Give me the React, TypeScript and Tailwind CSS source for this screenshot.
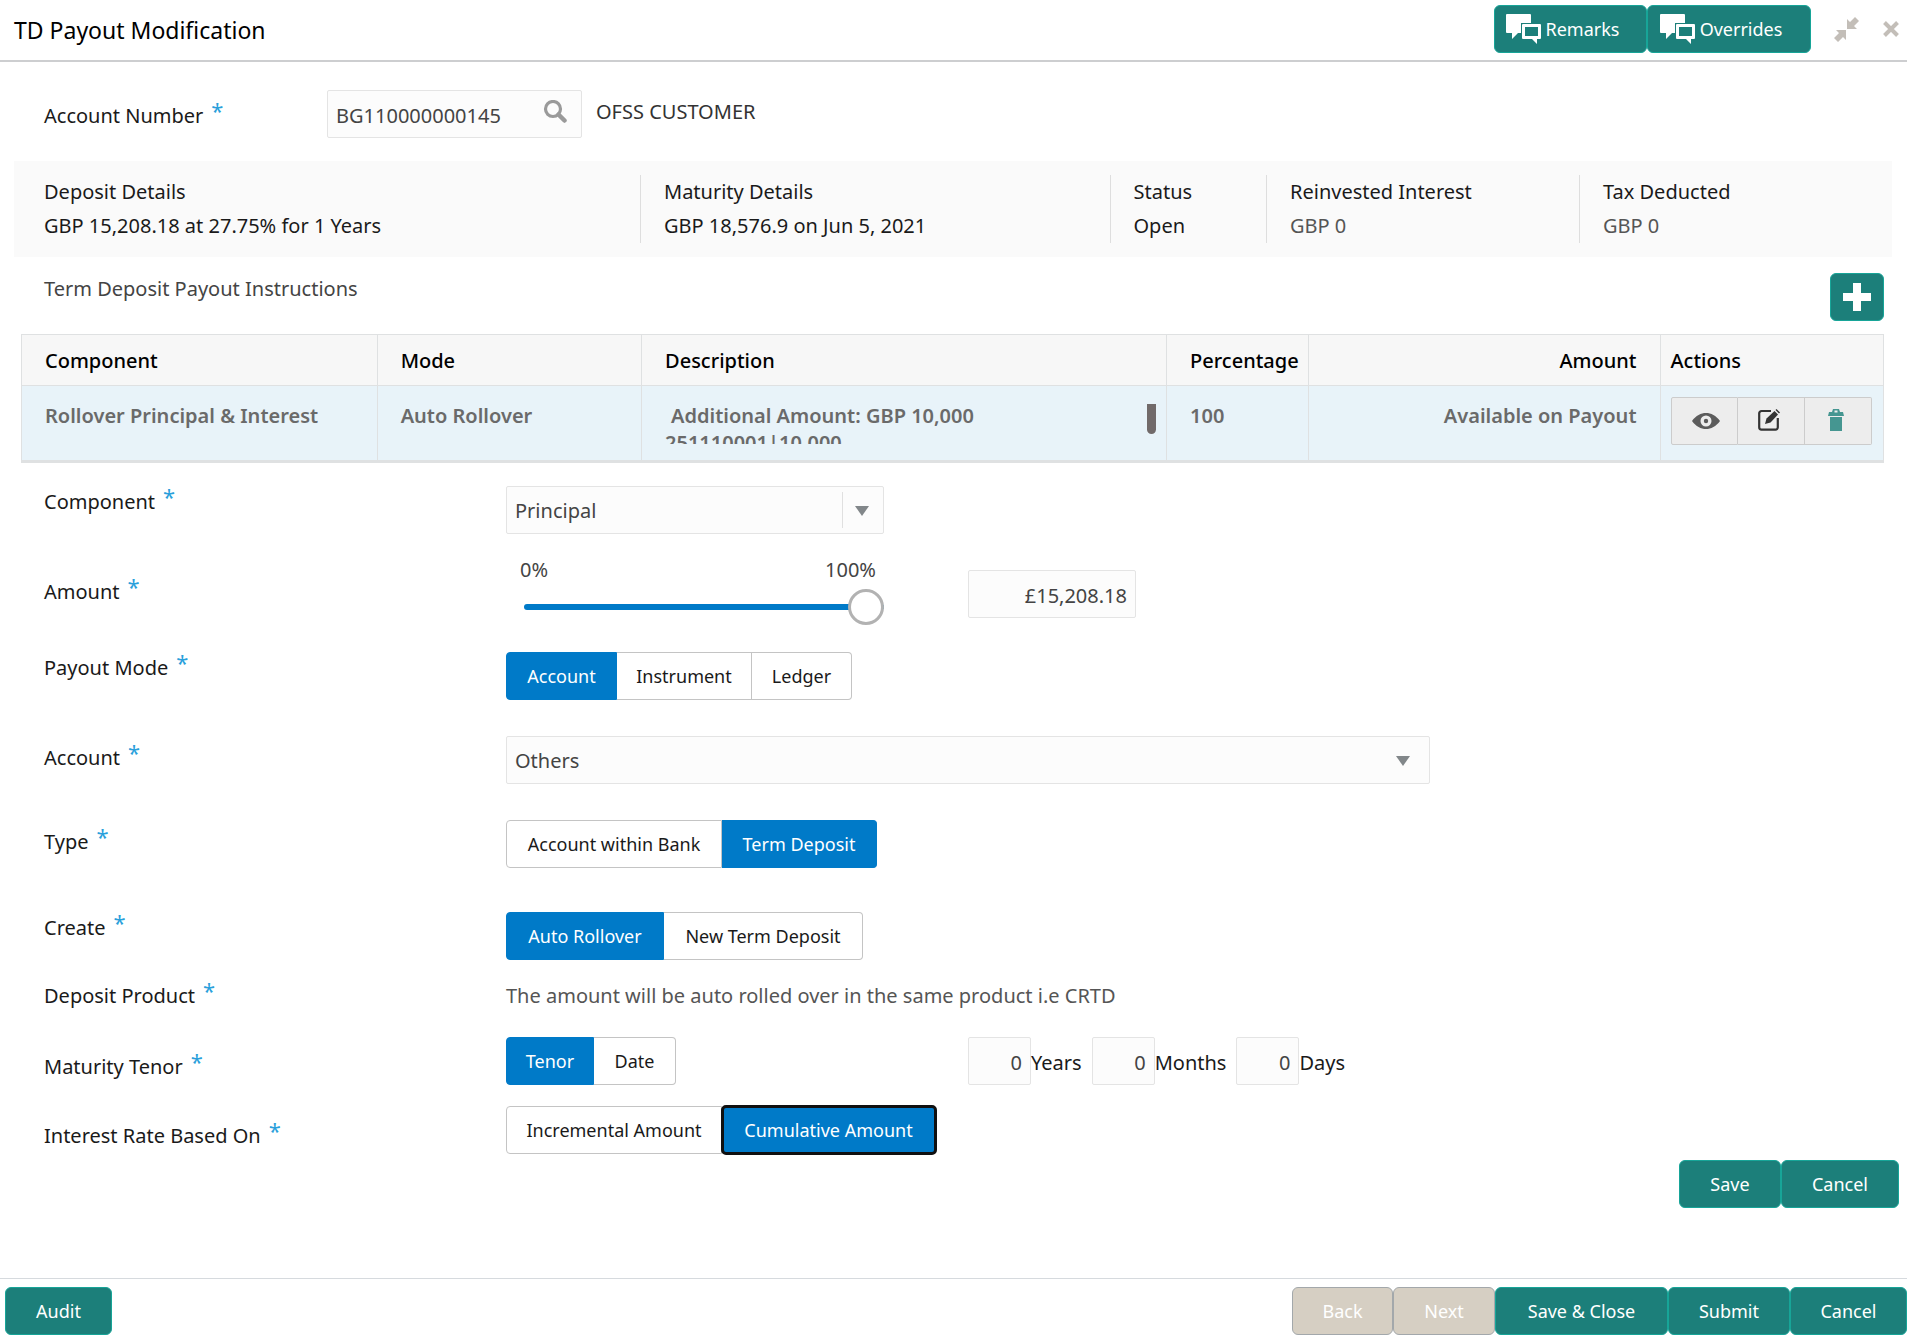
import { useState, type ReactNode } from 'react'
import { clsx } from 'clsx'

function ChatIcon() {
  return (
    <svg width="35" height="30" viewBox="0 0 35 30" aria-hidden="true">
      <path d="M1 0h23a1 1 0 0 1 1 1v8H15v10h-3l-6 6v-6H1a1 1 0 0 1-1-1V1a1 1 0 0 1 1-1z" fill="#fff" />
      <path
        fillRule="evenodd"
        d="M17 10h17a1 1 0 0 1 1 1v13a1 1 0 0 1-1 1h-3v5l-5-5h-9a1 1 0 0 1-1-1V11a1 1 0 0 1 1-1zm2 3v9h13v-9z"
        fill="#fff"
      />
    </svg>
  )
}

function SearchIcon() {
  return (
    <svg width="24" height="24" viewBox="0 0 24 24" fill="none" stroke="#9a9a9a" aria-hidden="true">
      <circle cx="10" cy="9" r="7.5" strokeWidth="3.2" />
      <path d="M15.500 14.500l6 6" strokeWidth="4.500" strokeLinecap="round" />
    </svg>
  )
}

function CollapseIcon() {
  return (
    <svg width="25" height="25" viewBox="0 0 25 25" fill="#c3beb8" aria-hidden="true">
      <path d="M13 12V2l3 3 5-5 4 4-5 5 3 3z" />
      <path d="M12 13v10l-3-3-5 5-4-4 5-5-3-3z" />
    </svg>
  )
}

function CloseIcon() {
  return (
    <svg width="16" height="16" viewBox="0 0 16 16" stroke="#c3beb8" strokeWidth="4" aria-hidden="true">
      <path d="M1.500 1.500l13 13M14.500 1.500l-13 13" />
    </svg>
  )
}

function PlusIcon() {
  return (
    <svg width="28" height="28" viewBox="0 0 28 28" fill="#fff" aria-hidden="true">
      <path d="M10 0h8v10h10v8H18v10h-8V18H0v-8h10z" />
    </svg>
  )
}

function EyeIcon() {
  return (
    <svg width="28" height="16" viewBox="0 0 28 16" fill="#5c5c5c" aria-hidden="true">
      <path
        fillRule="evenodd"
        d="M0 8C4 2.500 9 0 14 0s10 2.500 14 8c-4 5.500-9 8-14 8S4 13.500 0 8zm14-5.500a5.500 5.500 0 1 0 0 11 5.500 5.500 0 0 0 0-11z"
      />
      <circle cx="14" cy="8" r="2.200" />
    </svg>
  )
}

function EditIcon() {
  return (
    <svg width="22" height="22" viewBox="0 0 22 22" aria-hidden="true">
      <path
        d="M13 2H3.500A2.300 2.300 0 0 0 1.200 4.300v14a2.300 2.300 0 0 0 2.300 2.300h14a2.300 2.300 0 0 0 2.300-2.300V9"
        fill="none"
        stroke="#333"
        strokeWidth="2.200"
      />
      <path d="M7 15l1.500-5.500L16.500 2l3.500 3.500-7.500 8z" fill="#333" />
      <path d="M17.500 1l1-1L22 3.500l-1 1z" fill="#333" />
    </svg>
  )
}

function TrashIcon() {
  return (
    <svg width="16" height="22" viewBox="0 0 16 22" fill="#459691" aria-hidden="true">
      <path fillRule="evenodd" d="M5 0h6l1 3h3l1 4H0l1-4h3zm1.500 1.500v2h3v-2z" />
      <path d="M2 8h12v14H2z" />
    </svg>
  )
}

function Arrow() {
  return (
    <svg width="14" height="10" viewBox="0 0 14 10" fill="#82878a" aria-hidden="true">
      <path d="M0 0h14L7 10z" />
    </svg>
  )
}

interface ActionButtonProps {
  children: ReactNode
  className?: string
  disabled?: boolean
}

function ActionButton({ children, className, disabled }: ActionButtonProps) {
  return (
    <button
      type="button"
      disabled={disabled}
      className={clsx(
        'flex h-12 items-center justify-center rounded-md border text-lg text-white',
        disabled ? 'border-[#a3a8ab] bg-[#d6cfc3]' : 'border-[#17a598] bg-[#1c7f7a]',
        className,
      )}
    >
      {children}
    </button>
  )
}

function Required() {
  return <span className="ml-2 text-[22px] leading-4 text-[#2a9fdb]">*</span>
}

interface FormRowProps {
  label: string
  htmlFor?: string
  className: string
  labelClass?: string
  children: ReactNode
}

function FormRow({ label, htmlFor, className, labelClass = 'pt-0.5', children }: FormRowProps) {
  return (
    <div className={clsx('grid grid-cols-4', className)}>
      <label htmlFor={htmlFor} className={clsx('flex items-start leading-7 text-[#1a1a1a]', labelClass)}>
        {label}
        <Required />
      </label>
      {children}
    </div>
  )
}

interface Option {
  label: string
  width: string
}

interface ToggleGroupProps {
  name: string
  options: Option[]
  initial: string
  focused?: boolean
}

function ToggleGroup({ name, options, initial, focused }: ToggleGroupProps) {
  const [value, setValue] = useState(initial)

  return (
    <div role="group" aria-label={name} className="flex h-12">
      {options.map((option, i) => {
        const selected = option.label === value
        return (
          <button
            key={option.label}
            type="button"
            aria-pressed={selected}
            onClick={() => setValue(option.label)}
            className={clsx(
              'h-12 border text-lg whitespace-nowrap',
              option.width,
              i === 0 && 'rounded-l-sm',
              i === options.length - 1 && 'rounded-r-sm',
              i > 0 && 'border-l-0',
              selected ? 'border-[#007ac8] bg-[#007ac8] text-white' : 'border-[#c4c4c4] bg-white text-[#1a1a1a]',
              selected && focused && 'rounded-sm outline-3 -outline-offset-2 outline-[#101010]',
            )}
          >
            {option.label}
          </button>
        )
      })}
    </div>
  )
}

const inputClass = 'h-12 rounded-xs border border-[#e4e4e4] bg-[#fcfcfc] px-2 pt-0.5 text-[#444]'
const iconButtonClass = 'flex h-12 w-[67px] items-center justify-center border-[#ccc] bg-[#ededed]'

const summary = [
  { title: 'Deposit Details', value: 'GBP 15,208.18 at 27.75% for 1 Years', className: 'col-span-4 pl-[30px]' },
  { title: 'Maturity Details', value: 'GBP 18,576.9 on Jun 5, 2021', className: 'col-span-3 border-l pl-[23px]' },
  { title: 'Status', value: 'Open', className: 'col-span-1 border-l pl-[23px]' },
  { title: 'Reinvested Interest', value: 'GBP 0', className: 'col-span-2 border-l pl-[23px]', muted: true },
  { title: 'Tax Deducted', value: 'GBP 0', className: 'col-span-2 border-l pl-[23px]', muted: true },
]

const tenorUnits = ['Years', 'Months', 'Days']

function InstructionsTable() {
  return (
    <table className="w-full table-fixed border border-b-3 border-[#dfe1e2] text-left">
      <colgroup>
        <col className="w-[19.1%]" />
        <col className="w-[14.2%]" />
        <col className="w-[28.2%]" />
        <col className="w-[7.6%]" />
        <col className="w-[18.9%]" />
        <col className="w-[12%]" />
      </colgroup>
      <thead className="bg-[#f7f7f7] text-black">
        <tr className="h-[51px] divide-x divide-[#dfe1e2] border-b border-[#dfe1e2]">
          <th className="pt-0.5 pl-[23px] font-medium">Component</th>
          <th className="pt-0.5 pl-[23px] font-medium">Mode</th>
          <th className="pt-0.5 pl-[23px] font-medium">Description</th>
          <th className="pt-0.5 pl-[23px] font-medium">Percentage</th>
          <th className="pt-0.5 pr-[23px] text-right font-medium">Amount</th>
          <th className="pt-0.5 pl-2.5 font-medium">Actions</th>
        </tr>
      </thead>
      <tbody className="bg-[#e8f3f9] align-top font-semibold text-[#6a6a6a]">
        <tr className="h-[76px] divide-x divide-[#dfe1e2]">
          <td className="pt-4 pl-[23px] leading-7">Rollover Principal &amp; Interest</td>
          <td className="pt-4 pl-[23px] leading-7">Auto Rollover</td>
          <td className="pt-4 pr-2.5 pl-[23px]">
            <div className="flex h-[42px] justify-between overflow-hidden">
              <div className="leading-[27px]">
                <p className="pl-1.5">Additional Amount: GBP 10,000</p>
                <p>251110001|10,000</p>
              </div>
              <span className="mt-0.5 h-[30px] w-[9px] rounded-b-full bg-[#716a6a]" />
            </div>
          </td>
          <td className="pt-4 pl-[23px] leading-7">100</td>
          <td className="pt-4 pr-[23px] text-right leading-7">Available on Payout</td>
          <td className="pt-[11px] pl-2.5">
            <div className="flex">
              <button type="button" aria-label="View" className={clsx(iconButtonClass, 'rounded-l-xs border pl-1')}>
                <EyeIcon />
              </button>
              <button type="button" aria-label="Edit" className={clsx(iconButtonClass, 'border-y border-r pr-1 pb-0.5')}>
                <EditIcon />
              </button>
              <button type="button" aria-label="Delete" className={clsx(iconButtonClass, 'rounded-r-xs border-y border-r pr-1 pb-0.5')}>
                <TrashIcon />
              </button>
            </div>
          </td>
        </tr>
      </tbody>
    </table>
  )
}

export default function App() {
  const [percent, setPercent] = useState(100)

  return (
    <div className="flex min-h-screen flex-col bg-white pr-[9px] font-['Noto_Sans',sans-serif] text-xl leading-7 text-[#1a1a1a]">
      <header className="flex h-[62px] items-start border-b-2 border-[#cdced0] pt-[5px]">
        <h1 className="mr-auto ml-3.5 pt-[11px] text-[23px] text-black">TD Payout Modification</h1>
        <ActionButton className="w-[153px] gap-[5px] pr-4">
          <ChatIcon />
          Remarks
        </ActionButton>
        <ActionButton className="w-[164px] gap-[5px] pr-4">
          <ChatIcon />
          Overrides
        </ActionButton>
        <button type="button" aria-label="Collapse" className="mt-3 ml-[23px]">
          <CollapseIcon />
        </button>
        <button type="button" aria-label="Close" className="mt-4 mr-2 ml-6">
          <CloseIcon />
        </button>
      </header>

      <main className="pr-[15px] pl-3.5">
        <div className="flex h-[99px] pt-7 pl-[30px]">
          <label htmlFor="account-number" className="flex w-[283px] items-start pt-3">
            Account Number
            <Required />
          </label>
          <div className="relative h-12 w-[255px]">
            <input id="account-number" defaultValue="BG110000000145" className={clsx(inputClass, 'w-full pr-12')} />
            <button type="button" aria-label="Search account" className="absolute top-2.5 right-[15px]">
              <SearchIcon />
            </button>
          </div>
          <span className="pt-2 pl-3.5 text-[#333]">OFSS CUSTOMER</span>
        </div>

        <section className="grid h-24 grid-cols-12 bg-[#fafafa] py-3.5">
          {summary.map((item) => (
            <div key={item.title} className={clsx('border-[#dedede] leading-[34px]', item.className)}>
              <p className="text-[#1a1a1a]">{item.title}</p>
              <p className={clsx(item.muted && 'text-[#555]')}>{item.value}</p>
            </div>
          ))}
        </section>

        <section className="pr-2 pl-[7px]">
          <div className="flex h-[77px] items-start justify-between pt-4 pl-[23px]">
            <h2 className="pt-0.5 text-[#444]">Term Deposit Payout Instructions</h2>
            <ActionButton className="w-[54px]">
              <PlusIcon />
            </ActionButton>
          </div>
          <InstructionsTable />
        </section>

        <form className="pt-[23px] pl-[30px]">
          <FormRow label="Component" htmlFor="component" className="h-[70px]">
            <div className="relative h-12 w-[378px]">
              <select id="component" className={clsx(inputClass, 'w-full appearance-none')}>
                <option>Principal</option>
              </select>
              <span className="pointer-events-none absolute top-1.5 right-0 flex h-9 w-[42px] items-center justify-center border-l border-[#e0e0e0] pt-0.5 pr-1">
                <Arrow />
              </span>
            </div>
          </FormRow>

          <FormRow label="Amount" htmlFor="amount" className="h-24" labelClass="pt-[22px]">
            <div className="w-[378px]">
              <div className="flex justify-between pr-2 pl-3.5 text-[#444]">
                <span>0%</span>
                <span>100%</span>
              </div>
              <div className="pt-[5px] pl-[18px]">
                <input
                  type="range"
                  aria-label="Amount percentage"
                  min={0}
                  max={100}
                  value={percent}
                  onChange={(e) => setPercent(Number(e.target.value))}
                  className="block h-9 w-full appearance-none bg-transparent [&::-webkit-slider-runnable-track]:h-1.5 [&::-webkit-slider-runnable-track]:rounded-full [&::-webkit-slider-runnable-track]:bg-[#007ac8] [&::-webkit-slider-thumb]:-mt-[15px] [&::-webkit-slider-thumb]:size-9 [&::-webkit-slider-thumb]:appearance-none [&::-webkit-slider-thumb]:rounded-full [&::-webkit-slider-thumb]:border-3 [&::-webkit-slider-thumb]:border-[#b2b2b2] [&::-webkit-slider-thumb]:bg-white"
                />
              </div>
            </div>
            <div className="pt-3.5">
              <input id="amount" defaultValue="£15,208.18" className={clsx(inputClass, 'w-[168px] text-right')} />
            </div>
          </FormRow>

          <FormRow label="Payout Mode" className="h-[84px]">
            <ToggleGroup
              name="Payout Mode"
              initial="Account"
              options={[
                { label: 'Account', width: 'w-[111px]' },
                { label: 'Instrument', width: 'w-[135px]' },
                { label: 'Ledger', width: 'w-[100px]' },
              ]}
            />
          </FormRow>

          <FormRow label="Account" htmlFor="account" className="h-[84px]" labelClass="pt-2">
            <div className="relative col-span-2 h-12">
              <select id="account" className={clsx(inputClass, 'w-full appearance-none')}>
                <option>Others</option>
              </select>
              <span className="pointer-events-none absolute top-1.5 right-1.5 flex h-9 w-[42px] items-center justify-center pt-0.5">
                <Arrow />
              </span>
            </div>
          </FormRow>

          <FormRow label="Type" className="h-[92px]" labelClass="pt-2">
            <ToggleGroup
              name="Type"
              initial="Term Deposit"
              options={[
                { label: 'Account within Bank', width: 'w-[216px]' },
                { label: 'Term Deposit', width: 'w-[155px]' },
              ]}
            />
          </FormRow>

          <FormRow label="Create" className="h-[70px]">
            <ToggleGroup
              name="Create"
              initial="Auto Rollover"
              options={[
                { label: 'Auto Rollover', width: 'w-[158px]' },
                { label: 'New Term Deposit', width: 'w-[199px]' },
              ]}
            />
          </FormRow>

          <FormRow label="Deposit Product" className="h-[55px]" labelClass="pt-0">
            <p className="col-span-2 text-[#555]">The amount will be auto rolled over in the same product i.e CRTD</p>
          </FormRow>

          <FormRow label="Maturity Tenor" className="h-[69px]" labelClass="pt-4">
            <ToggleGroup
              name="Maturity Tenor"
              initial="Tenor"
              options={[
                { label: 'Tenor', width: 'w-[88px]' },
                { label: 'Date', width: 'w-[82px]' },
              ]}
            />
            <div className="flex gap-2.5">
              {tenorUnits.map((unit) => (
                <label key={unit} className="flex h-12 items-center">
                  <input defaultValue="0" className={clsx(inputClass, 'w-[63px] text-right')} />
                  <span className="pt-1">{unit}</span>
                </label>
              ))}
            </div>
          </FormRow>

          <FormRow label="Interest Rate Based On" className="h-[54px]" labelClass="pt-4">
            <ToggleGroup
              name="Interest Rate Based On"
              initial="Cumulative Amount"
              focused
              options={[
                { label: 'Incremental Amount', width: 'w-[216px]' },
                { label: 'Cumulative Amount', width: 'w-[214px]' },
              ]}
            />
          </FormRow>
        </form>
      </main>

      <div className="flex justify-end pr-2">
        <ActionButton className="w-[102px]">Save</ActionButton>
        <ActionButton className="w-[118px]">Cancel</ActionButton>
      </div>

      <footer className="mt-auto flex border-t border-[#d6dade] pt-2 pb-[7px] pl-[5px]">
        <ActionButton className="mr-auto w-[107px]">Audit</ActionButton>
        <ActionButton disabled className="w-[101px]">
          Back
        </ActionButton>
        <ActionButton disabled className="w-[102px]">
          Next
        </ActionButton>
        <ActionButton className="w-[173px]">Save &amp; Close</ActionButton>
        <ActionButton className="w-[122px]">Submit</ActionButton>
        <ActionButton className="w-[117px]">Cancel</ActionButton>
      </footer>
    </div>
  )
}
